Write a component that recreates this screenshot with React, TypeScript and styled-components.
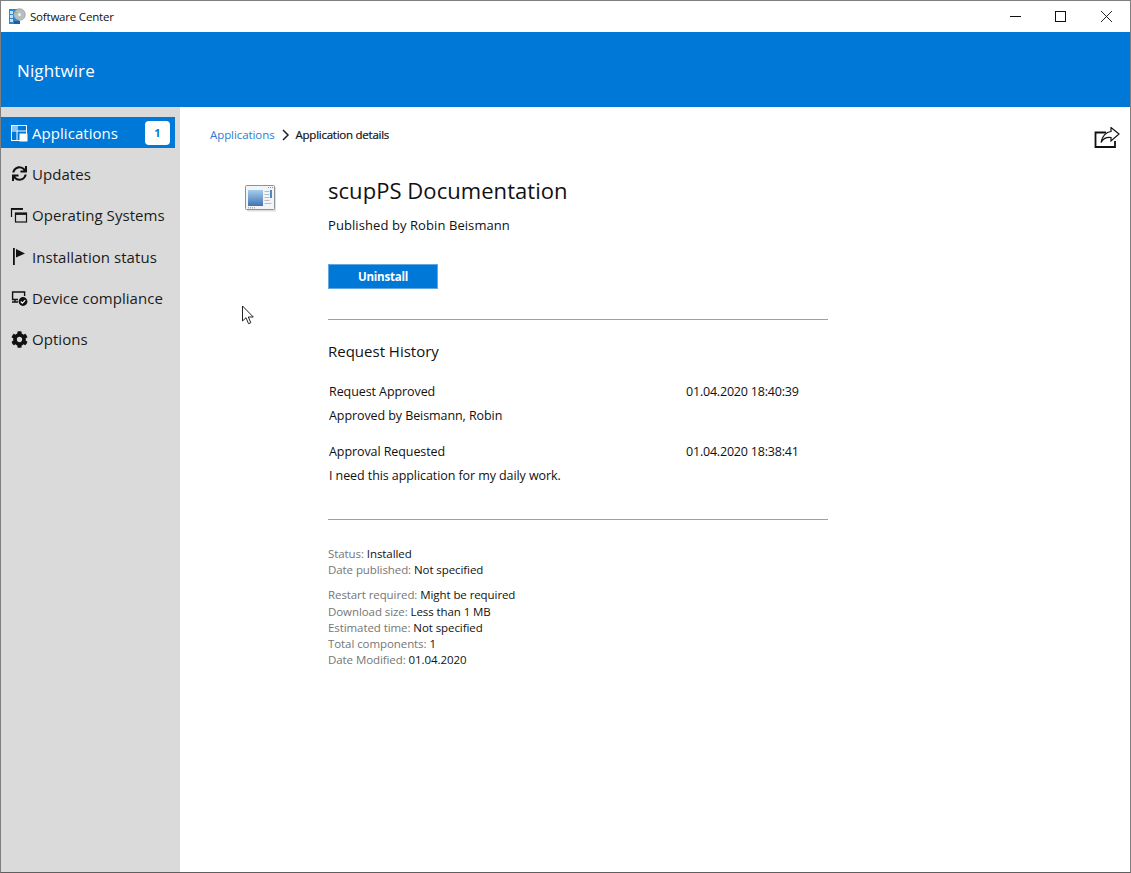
import React from 'react';
import styled, { createGlobalStyle } from 'styled-components';
import { FaCog, FaSync } from 'react-icons/fa';

const GlobalStyle = createGlobalStyle`
  html, body {
    margin: 0;
    padding: 0;
    background: #fff;
    font-family: "Open Sans", "Noto Sans", "Liberation Sans", sans-serif;
  }
`;

const Window = styled.div`
  position: relative;
  box-sizing: border-box;
  display: flex;
  flex-direction: column;
  width: 1131px;
  height: 873px;
  border: 1px solid #7f7f7f;
  border-bottom-color: #5f5f5f;
  overflow: hidden;
  background: #fff;
  color: #111;
`;

const TitleBar = styled.div`
  display: flex;
  align-items: center;
  height: 31px;
  flex-shrink: 0;
  padding-left: 8px;
`;

const TitleText = styled.span`
  margin-left: 4px;
  font-size: 11.5px;
  letter-spacing: -0.2px;
`;

const WindowControls = styled.div`
  display: flex;
  margin-left: auto;
  margin-right: 1px;
  height: 100%;
`;

const ControlButton = styled.div`
  display: flex;
  align-items: center;
  justify-content: center;
  width: 45.5px;
  height: 100%;
`;

const Banner = styled.div`
  display: flex;
  align-items: center;
  box-sizing: border-box;
  height: 75px;
  flex-shrink: 0;
  padding: 1px 0 0 16px;
  background: #0078d7;
  color: #fff;
  font-size: 17px;
  letter-spacing: 0.12px;
`;

const Body = styled.div`
  display: flex;
  flex: 1;
  min-height: 0;
`;

const Sidebar = styled.nav`
  box-sizing: border-box;
  width: 179px;
  flex-shrink: 0;
  padding-top: 10px;
  background: #dadada;
`;

const NavItem = styled.div<{ $active?: boolean }>`
  display: flex;
  align-items: center;
  box-sizing: border-box;
  width: 174px;
  height: 31px;
  margin-bottom: 10.4px;
  padding: 0 5px 0 9px;
  font-size: 15px;
  letter-spacing: 0.05px;
  background: ${(p) => (p.$active ? '#0078d7' : 'transparent')};
  color: ${(p) => (p.$active ? '#fff' : '#1a1a1a')};
`;

const NavIcon = styled.span`
  display: flex;
  align-items: center;
  justify-content: center;
  width: 18px;
  height: 18px;
  margin-right: 4px;
  flex-shrink: 0;
`;

const Badge = styled.span`
  display: flex;
  align-items: center;
  justify-content: center;
  width: 25px;
  height: 24px;
  margin-left: auto;
  border-radius: 4px;
  background: #fff;
  color: #0078d7;
  font-size: 11px;
  font-weight: 700;
  letter-spacing: 0;
`;

const Main = styled.main`
  flex: 1;
  min-width: 0;
  padding: 0 10px 0 30px;
`;

const TopRow = styled.div`
  display: flex;
  align-items: center;
  box-sizing: border-box;
  height: 58px;
  padding-bottom: 3px;
`;

const Crumbs = styled.div`
  display: flex;
  align-items: center;
  font-size: 11.5px;
`;

const CrumbLink = styled.a`
  color: #2b7cd3;
  text-decoration: none;
  letter-spacing: -0.08px;
`;

const CrumbCurrent = styled.span`
  color: #111;
  font-weight: 500;
  letter-spacing: -0.25px;
  -webkit-text-stroke: 0.2px #111;
`;

const ShareButton = styled.div`
  display: flex;
  margin-left: auto;
  margin-top: 7px;
`;

const DetailRow = styled.div`
  display: flex;
`;

const AppIconColumn = styled.div`
  width: 118px;
  flex-shrink: 0;
  padding: 20px 0 0 35px;
  box-sizing: border-box;
`;

const Content = styled.div`
  width: 500px;
  padding-top: 8px;
`;

const Title = styled.h1`
  margin: 0;
  font-size: 22px;
  font-weight: 400;
  line-height: 34px;
  letter-spacing: 0.05px;
`;

const Publisher = styled.div`
  margin-top: 9px;
  font-size: 13px;
  line-height: 18px;
  letter-spacing: 0.08px;
`;

const PrimaryButton = styled.button`
  display: block;
  box-sizing: border-box;
  width: 110px;
  height: 25px;
  margin-top: 30px;
  padding: 0;
  border: 1px solid #63a8e2;
  background: #0078d7;
  color: #fff;
  font-family: inherit;
  font-size: 11.5px;
  font-weight: 700;
  letter-spacing: -0.2px;
`;

const Divider = styled.hr<{ $top: number }>`
  margin: ${(p) => p.$top}px 0 0;
  border: 0;
  border-top: 1px solid #a0a0a0;
`;

const SectionTitle = styled.h2`
  margin: 20px 0 0;
  font-size: 15px;
  font-weight: 400;
  line-height: 22px;
  letter-spacing: 0px;
`;

const HistoryEntry = styled.div<{ $top: number }>`
  display: grid;
  grid-template-columns: 357px 1fr;
  margin-top: ${(p) => p.$top}px;
  padding-left: 1px;
  font-size: 12.5px;
  line-height: 23.5px;
  letter-spacing: -0.08px;
`;

const HistoryDate = styled.span`
  letter-spacing: -0.2px;
`;

const FactGroup = styled.div<{ $top: number }>`
  margin-top: ${(p) => p.$top}px;
  font-size: 11.5px;
  line-height: 16.2px;
  letter-spacing: -0.08px;
`;

const FactLabel = styled.span`
  color: #767676;
`;

const Cursor = styled.svg`
  position: absolute;
  left: 240px;
  top: 304px;
`;

function AppGlyph() {
  return (
    <svg width="18" height="18" viewBox="0 0 18 18">
      <rect x="1.5" y="1.5" width="15" height="15" fill="none" stroke="#fff" />
      <path d="M7 2v14M2 7h14" stroke="#fff" />
      <path d="M2 2h5v5H2z" fill="#8fc4ee" />
      <rect x="9.5" y="9.5" width="8" height="8" fill="#fff" />
    </svg>
  );
}

function WindowsGlyph() {
  return (
    <svg width="18" height="18" viewBox="0 0 18 18" fill="none" stroke="#111" strokeWidth="1.2">
      <path d="M1.5 11V2.6h11" strokeWidth="1.2" />
      <path d="M1 3h12" strokeWidth="1.8" />
      <rect x="5.5" y="7" width="11" height="9" />
      <path d="M5 8h12" strokeWidth="1.8" />
    </svg>
  );
}

function FlagGlyph() {
  return (
    <svg width="18" height="18" viewBox="0 0 18 18">
      <rect x="3" y="0" width="1.8" height="17" fill="#111" />
      <path d="M6 1l9 4.500-9 4z" fill="#111" />
    </svg>
  );
}

function DeviceGlyph() {
  return (
    <svg width="18" height="18" viewBox="0 0 18 18">
      <path d="M8 10.5H2.6V3h12v4M2 13h6M5 11v2" fill="none" stroke="#111" strokeWidth="1.4" />
      <circle cx="13" cy="12.5" r="4.4" fill="#111" />
      <path d="M10.8 12.5l1.6 1.6 2.8-3" fill="none" stroke="#fff" strokeWidth="1.2" />
    </svg>
  );
}

function ShareGlyph() {
  return (
    <svg width="26" height="22" viewBox="0 0 26 22" fill="none" stroke="#111">
      <path d="M12 5.500H1.500V20H21v-6" strokeWidth="1.8" />
      <path d="M25 7l-8-6.500v4c-5 .5-9 5-10 11 2-4 5-5.500 10-5v3.500z" fill="#fff" strokeWidth="1.2" />
    </svg>
  );
}

function DocumentIcon() {
  return (
    <svg width="32" height="27" viewBox="0 0 32 27">
      <defs>
        <linearGradient id="docPane" x1="0" y1="0" x2="0" y2="1">
          <stop offset="0" stopColor="#a5cdec" />
          <stop offset="1" stopColor="#3e74b4" />
        </linearGradient>
      </defs>
      <rect x="2" y="2" width="29" height="24.500" rx="1" fill="#c9c9c9" opacity="0.6" />
      <rect x="0.500" y="0.500" width="29" height="24" rx="1" fill="#f2f4f6" stroke="#8d9299" />
      <rect x="3" y="5" width="15" height="16" fill="url(#docPane)" />
      <path d="M19.500 6.500h5M19.500 9.500h5M19.500 12.500h5M19.500 15.500h5M19.500 18.500h7" stroke="#b8bcc2" />
      <rect x="25" y="5" width="2" height="8" fill="#4a8ac6" />
      <path d="M23 2.500h5M3 22.800h8" stroke="#8d9299" strokeDasharray="1 1" />
    </svg>
  );
}

function AppLogo() {
  return (
    <svg width="17" height="17" viewBox="0 0 17 17">
      <rect x="0" y="1" width="10" height="15" fill="#2f86c8" />
      <path d="M1 3h3v3H1zM1 7h3v3H1zM1 11h3v3H1z" fill="#bfe2f7" />
      <circle cx="10.500" cy="6.500" r="5.800" fill="#b9bdc2" stroke="#85898e" strokeWidth="0.6" />
      <circle cx="10.500" cy="6.500" r="1.500" fill="#eef0f2" />
      <circle cx="6.800" cy="4.500" r="1" fill="#6fcf4a" />
      <rect x="5" y="13" width="6" height="3" fill="#1f5f9e" />
    </svg>
  );
}

const navItems = [
  { label: 'Updates', icon: <FaSync size={15} color="#111" /> },
  { label: 'Operating Systems', icon: <WindowsGlyph /> },
  { label: 'Installation status', icon: <FlagGlyph /> },
  { label: 'Device compliance', icon: <DeviceGlyph /> },
  { label: 'Options', icon: <FaCog size={17} color="#111" /> },
];

function App() {
  return (
    <>
      <GlobalStyle />
      <Window>
        <TitleBar>
          <AppLogo />
          <TitleText>Software Center</TitleText>
          <WindowControls>
            <ControlButton>
              <svg width="11" height="11" viewBox="0 0 11 11"><path d="M0 5.500h11" stroke="#111" /></svg>
            </ControlButton>
            <ControlButton>
              <svg width="11" height="11" viewBox="0 0 11 11"><rect x="0.500" y="0.500" width="10" height="10" fill="none" stroke="#111" /></svg>
            </ControlButton>
            <ControlButton>
              <svg width="11" height="11" viewBox="0 0 11 11"><path d="M0 0l11 11M11 0L0 11" stroke="#111" strokeWidth="0.9" /></svg>
            </ControlButton>
          </WindowControls>
        </TitleBar>
        <Banner>Nightwire</Banner>
        <Body>
          <Sidebar>
            <NavItem $active>
              <NavIcon><AppGlyph /></NavIcon>
              Applications
              <Badge>1</Badge>
            </NavItem>
            {navItems.map((item) => (
              <NavItem key={item.label}>
                <NavIcon>{item.icon}</NavIcon>
                {item.label}
              </NavItem>
            ))}
          </Sidebar>
          <Main>
            <TopRow>
              <Crumbs>
                <CrumbLink href="#">Applications</CrumbLink>
                <svg width="21" height="12" viewBox="0 0 21 12" fill="none" stroke="#222" strokeWidth="1.5">
                  <path d="M8 1l5 5-5 5" />
                </svg>
                <CrumbCurrent>Application details</CrumbCurrent>
              </Crumbs>
              <ShareButton><ShareGlyph /></ShareButton>
            </TopRow>
            <DetailRow>
              <AppIconColumn><DocumentIcon /></AppIconColumn>
              <Content>
                <Title>scupPS Documentation</Title>
                <Publisher>Published by Robin Beismann</Publisher>
                <PrimaryButton>Uninstall</PrimaryButton>
                <Divider $top={30} />
                <SectionTitle>Request History</SectionTitle>
                <HistoryEntry $top={18}>
                  <span>Request Approved</span>
                  <HistoryDate>01.04.2020 18:40:39</HistoryDate>
                  <span>Approved by Beismann, Robin</span>
                </HistoryEntry>
                <HistoryEntry $top={13}>
                  <span>Approval Requested</span>
                  <HistoryDate>01.04.2020 18:38:41</HistoryDate>
                  <span>I need this application for my daily work.</span>
                </HistoryEntry>
                <Divider $top={32} />
                <FactGroup $top={26}>
                  <div><FactLabel>Status:</FactLabel> Installed</div>
                  <div><FactLabel>Date published:</FactLabel> Not specified</div>
                </FactGroup>
                <FactGroup $top={9}>
                  <div><FactLabel>Restart required:</FactLabel> Might be required</div>
                  <div><FactLabel>Download size:</FactLabel> Less than 1 MB</div>
                  <div><FactLabel>Estimated time:</FactLabel> Not specified</div>
                  <div><FactLabel>Total components:</FactLabel> 1</div>
                  <div><FactLabel>Date Modified:</FactLabel> 01.04.2020</div>
                </FactGroup>
              </Content>
            </DetailRow>
          </Main>
        </Body>
        <Cursor width="14" height="20" viewBox="0 0 14 20">
          <path d="M1.500 1v15l3.500-3.300 2.500 6 2.300-1-2.500-5.700h5z" fill="#fff" stroke="#222" strokeWidth="1" />
        </Cursor>
      </Window>
    </>
  );
}

export default App;
